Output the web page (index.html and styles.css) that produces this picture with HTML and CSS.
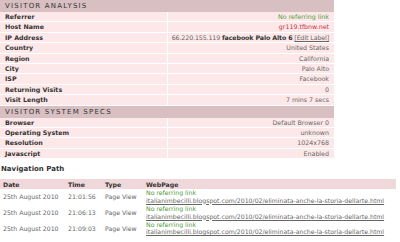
FILE: index.html
```html
<!DOCTYPE html>
<html>
<head>
<meta charset="utf-8">
<link rel="stylesheet" href="styles.css">
</head>
<body>
<table class="stats">
  <tr class="head"><th colspan="2">Visitor Analysis</th></tr>
  <tr><td class="lbl">Referrer</td><td class="val green">No referring link</td></tr>
  <tr><td class="lbl">Host Name</td><td class="val red">gr119.tfbnw.net</td></tr>
  <tr><td class="lbl">IP Address</td><td class="val tight">66.220.155.119 <b class="dark">facebook Palo Alto 6</b> <a class="edit">[Edit Label]</a></td></tr>
  <tr><td class="lbl">Country</td><td class="val">United States</td></tr>
  <tr><td class="lbl">Region</td><td class="val">California</td></tr>
  <tr><td class="lbl">City</td><td class="val">Palo Alto</td></tr>
  <tr><td class="lbl">ISP</td><td class="val">Facebook</td></tr>
  <tr><td class="lbl">Returning Visits</td><td class="val">0</td></tr>
  <tr><td class="lbl">Visit Length</td><td class="val">7 mins 7 secs</td></tr>
  <tr class="head"><th colspan="2">Visitor System Specs</th></tr>
  <tr><td class="lbl">Browser</td><td class="val">Default Browser 0</td></tr>
  <tr><td class="lbl">Operating System</td><td class="val">unknown</td></tr>
  <tr><td class="lbl">Resolution</td><td class="val">1024x768</td></tr>
  <tr><td class="lbl">Javascript</td><td class="val">Enabled</td></tr>
</table>
<div class="navtitle">Navigation Path</div>
<table class="nav">
  <tr class="nhead"><th class="c1">Date</th><th class="c2">Time</th><th class="c3">Type</th><th>WebPage</th></tr>
  <tr><td>25th August 2010</td><td>21:01:56</td><td>Page View</td><td><span class="green">No referring link</span><br><a class="url">italianimbecilli.blogspot.com/2010/02/eliminata-anche-la-storia-dellarte.html</a></td></tr>
  <tr><td>25th August 2010</td><td>21:06:13</td><td>Page View</td><td><span class="green">No referring link</span><br><a class="url">italianimbecilli.blogspot.com/2010/02/eliminata-anche-la-storia-dellarte.html</a></td></tr>
  <tr><td>25th August 2010</td><td>21:09:03</td><td>Page View</td><td><span class="green">No referring link</span><br><a class="url">italianimbecilli.blogspot.com/2010/02/eliminata-anche-la-storia-dellarte.html</a></td></tr>
</table>
</body>
</html>
```
FILE: styles.css
```css
body {
  margin: 0;
  background: #fff;
  font-family: "DejaVu Sans", Verdana, sans-serif;
  font-size: 6.3px;
  color: #666;
}
table { border-collapse: collapse; }
td, th { white-space: nowrap; }
.stats {
  width: 334px;
  table-layout: fixed;
}
.stats .head th {
  background: #d8c0c2;
  color: #333;
  text-transform: uppercase;
  letter-spacing: 1.2px;
  font-weight: normal;
  font-size: 7px;
  text-align: left;
  height: 12px;
  padding: 0 0 0 5px;
}
.stats td {
  background: #fde8e9;
  border-bottom: 1px solid #fff;
  height: 9.4px;
  padding: 0 5px;
  line-height: 9.4px;
  overflow: hidden;
}
.stats .lbl {
  font-weight: bold;
  color: #333;
  width: 143px;
  border-right: 1px solid #fff;
}
.stats .val { text-align: right; padding-left: 0; }
.stats .tight { letter-spacing: -0.12px; }
.green { color: #4e9a3c; }
.red { color: #c8323e; }
.dark { color: #333; }
.edit { text-decoration: underline; color: #666; }
.navtitle {
  font-weight: bold;
  color: #333;
  font-size: 7px;
  padding: 6px 0 5px 1px;
  line-height: 9px;
}
.nav { width: 396px; table-layout: fixed; font-size: 6.2px; }
.nav .nhead th {
  background: #f0d8da;
  color: #333;
  text-align: left;
  height: 10px;
  padding: 0 3px;
}
.nav td {
  padding: 0 3px 1px;
  line-height: 7.4px;
  vertical-align: middle;
  overflow: hidden;
}
.nav .c1 { width: 59px; }
.nav .c2 { width: 31px; }
.nav .c3 { width: 35px; }
.url { color: #666; text-decoration: underline; }
```
